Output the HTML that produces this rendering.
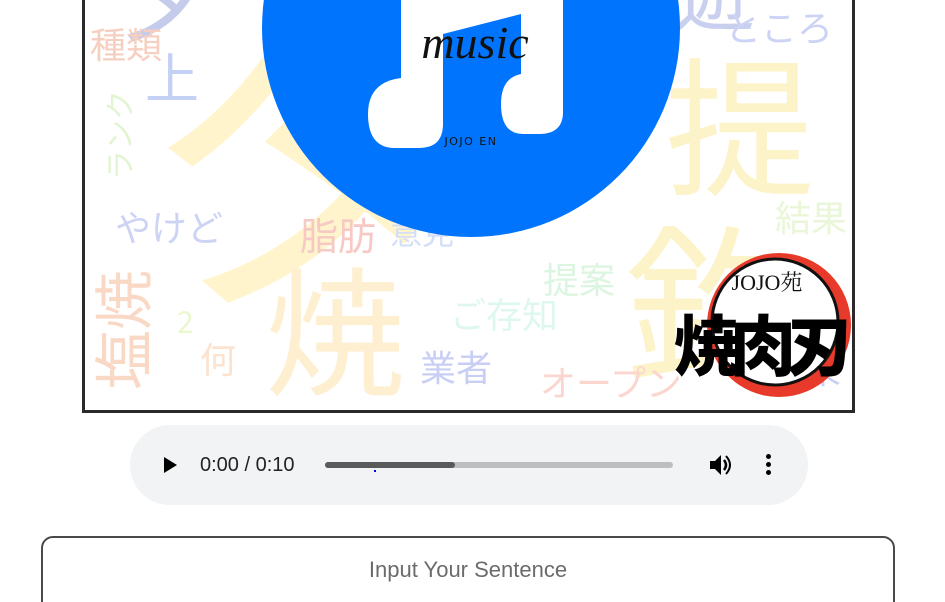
<!DOCTYPE html>
<html><head><meta charset="utf-8"><style>
html,body{margin:0;padding:0;background:#fff;width:945px;height:602px;overflow:hidden;position:relative;font-family:"Liberation Sans","Noto Sans CJK JP",sans-serif}
.frame{position:absolute;left:82px;top:-10px;width:767px;height:420px;border:3px solid #2a2a2a;border-top:none;overflow:hidden;background:#fff}
.w{position:absolute;font-family:"Noto Sans CJK JP",sans-serif;white-space:nowrap;line-height:1}
.player{position:absolute;left:130px;top:425px;width:678px;height:80px;border-radius:40px;background:#f1f3f4}
.input{position:absolute;left:41px;top:536px;width:854px;height:80px;border:2.5px solid #4a4a4a;border-radius:12px;box-sizing:border-box}
</style></head><body>
<div class="frame">
 <div class="w" style="left:50px;top:-40px;font-size:360px;color:#fff4cc">タ</div>
 <div class="w" style="left:30px;top:-50px;font-size:100px;color:#c5cbeb">夕</div>
 <div class="w" style="left:590px;top:-40px;font-size:80px;color:#c9cfee">遊</div>
 <div class="w" style="left:5px;top:35px;font-size:36px;color:#f6cfc0">種類</div>
 <div class="w" style="left:60px;top:58px;font-size:54px;color:#c5d0f5">上</div>
 <div class="w" style="left:640px;top:18px;font-size:36px;color:#cdd3f5">ところ</div>
 <div class="w" style="left:580px;top:55px;font-size:150px;color:#fdf3c8">提</div>
 <div class="w" style="left:-12px;top:130px;font-size:30px;color:#e2f5d2;transform:rotate(-90deg)">ランク</div>
 <div class="w" style="left:30px;top:218px;font-size:36px;color:#cdd3f5">やけど</div>
 <div class="w" style="left:215px;top:225px;font-size:38px;color:#f7c9c4">脂肪</div>
 <div class="w" style="left:305px;top:225px;font-size:32px;color:#d3def8">意見</div>
 <div class="w" style="left:690px;top:208px;font-size:36px;color:#eaf6d8">結果</div>
 <div class="w" style="left:540px;top:220px;font-size:170px;color:#fdf3c8">釣</div>
 <div class="w" style="left:-24px;top:310px;font-size:60px;color:#fad8c6;transform:rotate(-90deg)">塩焼</div>
 <div class="w" style="left:180px;top:265px;font-size:140px;color:#fdefd0">焼</div>
 <div class="w" style="left:458px;top:270px;font-size:36px;color:#dcf5e1">提案</div>
 <div class="w" style="left:365px;top:305px;font-size:36px;color:#def8ef">ご存知</div>
 <div class="w" style="left:92px;top:315px;font-size:30px;color:#eaf8d0">2</div>
 <div class="w" style="left:115px;top:350px;font-size:36px;color:#fbe3d0">何</div>
 <div class="w" style="left:335px;top:358px;font-size:36px;color:#c9cff4">業者</div>
 <div class="w" style="left:455px;top:373px;font-size:36px;color:#fbd6cf">オープン</div>
 <div class="w" style="left:720px;top:360px;font-size:36px;color:#c9cff4">果</div>
 <svg style="position:absolute;left:0;top:0" width="767" height="420" viewBox="82 -10 767 420">
  <circle cx="468" cy="28" r="209" fill="#0074fc"/>
  <path d="M398 -10 H440 V124 Q440 148 416 148 H392 Q365 148 365 114 Q365 82 398 78 Z" fill="#fff"/>
  <path d="M440 -10 H560 V112 Q560 134 536 134 H520 Q498 134 498 104 Q498 78 518 74 V14 L440 34 Z" fill="#fff"/>
  <text x="472" y="58" text-anchor="middle" font-family="'Liberation Serif',serif" font-style="italic" font-size="46" fill="#111">music</text>
  <text x="468" y="145" text-anchor="middle" font-family="'DejaVu Sans',sans-serif" font-size="11" letter-spacing="1.5" fill="#111">JOJO EN</text>
  <circle cx="776" cy="325" r="72" fill="#e73a2a"/>
  <circle cx="772" cy="322" r="63" fill="#fff" stroke="#111" stroke-width="3"/>
  <text x="764" y="290" text-anchor="middle" font-family="'Liberation Serif','Noto Serif CJK SC',serif" font-size="22" fill="#111">JOJO苑</text>
  <text x="755" y="370" text-anchor="middle" font-family="'Noto Sans CJK JP',sans-serif" font-weight="900" font-size="66" fill="#000" letter-spacing="-10">焼肉刃</text>
 </svg>
</div>
<div class="player">
 <svg style="position:absolute;left:32px;top:31px" width="16" height="18"><path d="M2 1 L15 9 L2 17 Z" fill="#000"/></svg>
 <div style="position:absolute;left:70px;top:29px;font-size:20px;color:#222">0:00 / 0:10</div>
 <div style="position:absolute;left:195px;top:37px;width:348px;height:6px;border-radius:3px;background:#bebebe"><div style="width:130px;height:6px;border-radius:3px;background:#5a5a5a"></div></div>
 <div style="position:absolute;left:244px;top:45px;width:2px;height:2px;background:#00f"></div>
 <svg style="position:absolute;left:578px;top:28px" width="26" height="24" viewBox="0 0 26 24"><path d="M2 8 H7 L13 2 V22 L7 16 H2 Z" fill="#000"/><path d="M16 7 Q20 12 16 17" stroke="#000" stroke-width="2.5" fill="none"/><path d="M18 3 Q26 12 18 21" stroke="#000" stroke-width="2" fill="none"/></svg>
 <div style="position:absolute;left:636px;top:29px;width:5px;height:5px;border-radius:50%;background:#000;box-shadow:0 8px 0 #000,0 16px 0 #000"></div>
</div>
<div class="input"><div style="position:absolute;left:0;right:0;top:19px;text-align:center;font-size:22px;color:#6b6b6b">Input Your Sentence</div></div>
</body></html>
